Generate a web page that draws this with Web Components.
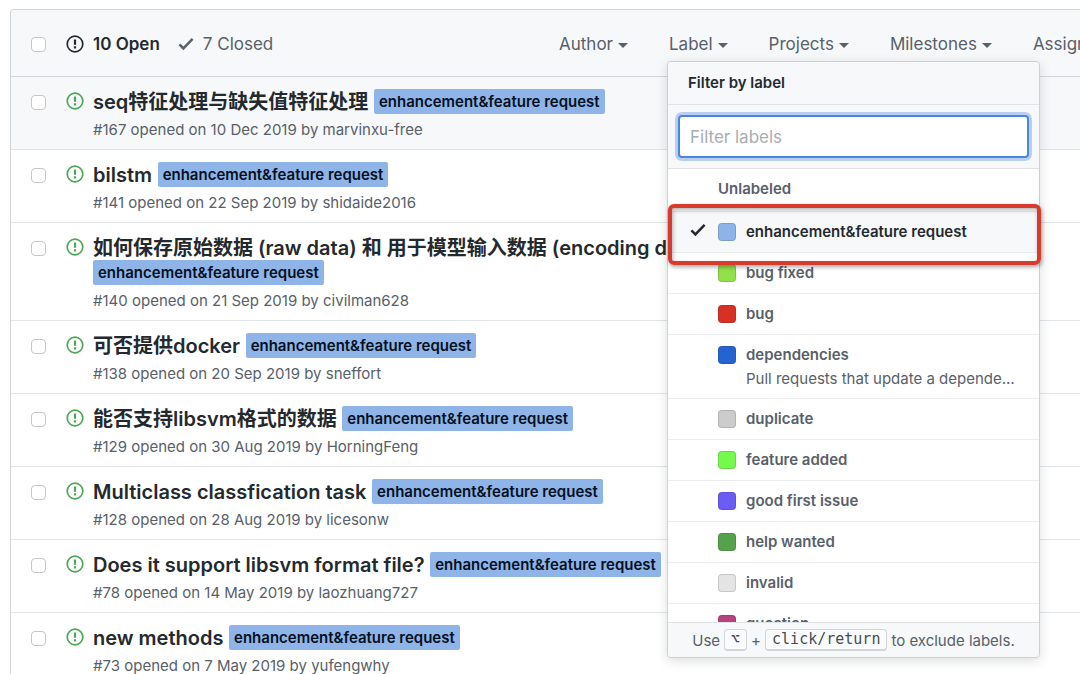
<!DOCTYPE html>
<html lang="en">
<head>
<meta charset="utf-8">
<title>Issues</title>
<style>
  html { overflow: hidden; }
  body {
    margin: 0;
    padding: 9px 0 0 10px;
    background: #fff;
    color: #24292e;
    font-family: Inter, "Noto Sans CJK SC", sans-serif;
    font-size: 15px;
  }
</style>
</head>
<body>
<issue-list>
  <issue-toolbar slot="toolbar" open="10" closed="7">
    <filter-button>Author</filter-button>
    <filter-button>Label
      <label-menu slot="menu">
        <label-option plain>Unlabeled</label-option>
        <label-option selected color="#8db4e8">enhancement&amp;feature request</label-option>
        <label-option color="#92e04a">bug fixed</label-option>
        <label-option color="#d93025">bug</label-option>
        <label-option color="#2563d0" note="Pull requests that update a dependency file">dependencies</label-option>
        <label-option color="#cccccc">duplicate</label-option>
        <label-option color="#75f94d">feature added</label-option>
        <label-option color="#6a5cf5">good first issue</label-option>
        <label-option color="#56a14b">help wanted</label-option>
        <label-option color="#e4e4e4">invalid</label-option>
        <label-option color="#b8417f">question</label-option>
      </label-menu>
    </filter-button>
    <filter-button>Projects</filter-button>
    <filter-button>Milestones</filter-button>
    <filter-button>Assignee</filter-button>
  </issue-toolbar>
  <issue-row active number="167" date="10 Dec 2019" author="marvinxu-free">seq特征处理与缺失值特征处理</issue-row>
  <issue-row number="141" date="22 Sep 2019" author="shidaide2016">bilstm</issue-row>
  <issue-row number="140" date="21 Sep 2019" author="civilman628">如何保存原始数据 (raw data) 和 用于模型输入数据 (encoding data)</issue-row>
  <issue-row number="138" date="20 Sep 2019" author="sneffort">可否提供docker</issue-row>
  <issue-row number="129" date="30 Aug 2019" author="HorningFeng">能否支持libsvm格式的数据</issue-row>
  <issue-row number="128" date="28 Aug 2019" author="licesonw">Multiclass classfication task</issue-row>
  <issue-row number="78" date="14 May 2019" author="laozhuang727">Does it support libsvm format file?</issue-row>
  <issue-row number="73" date="7 May 2019" author="yufengwhy">new methods</issue-row>
</issue-list>

<script>
const ISSUE_ICON = `
  <svg class="issue" viewBox="0 0 18 18" width="18" height="18" aria-hidden="true">
    <circle cx="9" cy="9" r="7.8" fill="none" stroke="currentColor" stroke-width="1.7"/>
    <path d="M7.9 4.4h2.2v5.4H7.9zM7.9 11.2h2.2v2.2H7.9z" fill="currentColor"/>
  </svg>`;

const CHECK_ICON = `
  <svg class="check" viewBox="0 0 16 14" width="16" height="14" aria-hidden="true">
    <path d="M1.4 7.4l4 4L14.6 1.8" fill="none" stroke="currentColor" stroke-width="2.5"/>
  </svg>`;

// shared by the toolbar and the rows
const TICK_CSS = `
  input[type="checkbox"] {
    appearance: none;
    flex: none;
    box-sizing: border-box;
    width: 15px;
    height: 15px;
    margin: 0;
    border: 1px solid #c4c6c8;
    border-radius: 4px;
    background: #fff;
  }
  svg { flex: none; display: block; }
`;

class IssueList extends HTMLElement {
  constructor() {
    super();
    this.attachShadow({ mode: 'open' }).innerHTML = `
      <style>
        :host {
          display: block;
          border: 1px solid #d1d5da;
          border-right: 0;
          border-radius: 4px 0 0 0;
          background: #fff;
        }
      </style>
      <slot name="toolbar"></slot>
      <slot></slot>
    `;
  }
}

class IssueToolbar extends HTMLElement {
  connectedCallback() {
    this.attachShadow({ mode: 'open' }).innerHTML = `
      <style>
        ${TICK_CSS}
        :host {
          display: grid;
          grid-template-columns: minmax(0, 1fr) 521px;
          align-items: center;
          box-sizing: border-box;
          height: 67px;
          padding-top: 2px;
          background: #f6f8fa;
          border-bottom: 1px solid #d1d5da;
          border-radius: 4px 0 0 0;
          font-size: 17px;
          color: #586069;
        }
        .states { display: flex; align-items: center; padding-left: 20px; }
        .issue { margin-left: 20px; }
        a { display: flex; align-items: center; gap: 9px; color: inherit; line-height: 24px; text-decoration: none; }
        a.open { color: #24292e; font-weight: 600; margin-right: 18px; }
        nav { display: flex; gap: 41px; }
      </style>
      <div class="states">
        <input type="checkbox" aria-label="Select all issues">
        <a class="open" href="#open">${ISSUE_ICON}${this.getAttribute('open')} Open</a>
        <a href="#closed">${CHECK_ICON}${this.getAttribute('closed')} Closed</a>
      </div>
      <nav><slot></slot></nav>
    `;
  }
}

class FilterButton extends HTMLElement {
  constructor() {
    super();
    this.attachShadow({ mode: 'open' }).innerHTML = `
      <style>
        :host { display: block; flex: none; position: relative; }
        button {
          display: flex;
          align-items: center;
          gap: 5px;
          padding: 0;
          border: 0;
          background: none;
          color: inherit;
          font: inherit;
          line-height: 24px;
          white-space: nowrap;
        }
        button::after {
          content: "";
          border: 5px solid transparent;
          border-top-color: currentColor;
          border-bottom: 0;
          margin-top: 3px;
        }
        /* the menu hangs under its button */
        ::slotted(label-menu) { position: absolute; top: 29px; left: -2px; z-index: 2; }
      </style>
      <button type="button"><slot></slot></button>
      <slot name="menu"></slot>
    `;
  }
}

class LabelMenu extends HTMLElement {
  constructor() {
    super();
    this.attachShadow({ mode: 'open' }).innerHTML = `
      <style>
        :host {
          display: block;
          box-sizing: border-box;
          width: 373px;
          border: 1px solid #ccd0d5;
          border-radius: 4px;
          background: #fff;
          box-shadow: 0 3px 12px rgba(27,31,35,0.15);
          font-size: 15px;
        }
        header, .search, footer { background: #f6f8fa; }
        header {
          padding: 0 20px;
          border-bottom: 1px solid #e1e4e8;
          border-radius: 4px 4px 0 0;
          line-height: 42px;
          font-weight: 600;
          color: #24292e;
        }
        .search { padding: 10px; border-bottom: 1px solid #dfe2e5; }
        input {
          display: block;
          box-sizing: border-box;
          width: 100%;
          height: 43px;
          padding: 0 10px;
          border: 2px solid #4a86dd;
          border-radius: 4px;
          outline: 0;
          box-shadow: 0 0 0 3px #b9cff1;
          background: #fff;
          color: #24292e;
          font: inherit;
          font-size: 17px;
        }
        input::placeholder { color: #a9adb2; opacity: 1; }
        .options { height: 453px; overflow: hidden; }
        footer {
          display: flex;
          align-items: center;
          justify-content: center;
          gap: 4px;
          height: 34px;
          border-top: 1px solid #dfe2e5;
          border-radius: 0 0 4px 4px;
          white-space: nowrap;
        }
        kbd {
          padding: 0 6px;
          border: 1px solid #d1d5da;
          border-bottom-width: 2px;
          border-radius: 4px;
          background: #fafbfc;
          color: #444d56;
          font: 15px/19px "DejaVu Sans Mono", monospace;
        }
        .mark {
          position: absolute;
          top: 142px;
          left: 0;
          right: -2px;
          box-sizing: border-box;
          height: 61px;
          border: 4px solid #d93a2e;
          border-radius: 6px;
          box-shadow: 1px 2px 4px rgba(0,0,0,0.35), inset 1px 2px 4px rgba(0,0,0,0.3);
          pointer-events: none;
        }
      </style>
      <header>Filter by label</header>
      <div class="search"><input type="text" placeholder="Filter labels" aria-label="Filter labels"></div>
      <div class="options" role="menu"><slot></slot></div>
      <footer><span>Use</span><kbd>⌥</kbd><span>+</span><kbd>click/return</kbd><span>to exclude labels.</span></footer>
      <div class="mark"></div>
    `;
  }
}

class LabelOption extends HTMLElement {
  connectedCallback() {
    const color = this.getAttribute('color');
    const note = this.getAttribute('note');
    this.attachShadow({ mode: 'open' }).innerHTML = `
      <style>
        :host { display: block; border-bottom: 1px solid #eaecef; }
        :host([selected]) { background: #f6f8fa; color: #24292e; }
        button {
          display: grid;
          grid-template-columns: 18px 18px minmax(0, 1fr);
          column-gap: 10px;
          align-items: center;
          width: 100%;
          padding: 8px 20px 8px 22px;
          border: 0;
          background: none;
          color: inherit;
          font: inherit;
          line-height: 24px;
          text-align: left;
        }
        :host([plain]) button { padding-bottom: 10px; }
        :host([plain]) .name { grid-column: 2 / 4; }
        .swatch {
          box-sizing: border-box;
          width: 18px;
          height: 18px;
          border: 1px solid rgba(27,31,35,0.15);
          border-radius: 4px;
        }
        .name { font-weight: 600; grid-column: 3; }
        .note {
          grid-column: 3;
          line-height: 23px;
          overflow: hidden;
          text-overflow: ellipsis;
          white-space: nowrap;
        }
      </style>
      <button type="button" role="menuitem">
        <span>${this.hasAttribute('selected') ? CHECK_ICON : ''}</span>
        ${color ? `<span class="swatch" style="background-color:${color}"></span>` : ''}
        <span class="name"><slot></slot></span>
        ${note ? `<span class="note">${note}</span>` : ''}
      </button>
    `;
  }
}

class IssueRow extends HTMLElement {
  connectedCallback() {
    const number = this.getAttribute('number');
    this.attachShadow({ mode: 'open' }).innerHTML = `
      <style>
        ${TICK_CSS}
        :host {
          display: flex;
          align-items: flex-start;
          padding: 13px 20px 8px;
          border-bottom: 1px solid #e1e4e8;
        }
        :host([active]) { background: #f6f8fa; }
        input[type="checkbox"] { margin-top: 5px; }
        .issue { margin: 2px 9px 0 20px; color: #4ba657; }
        .text { max-width: 800px; }
        .title { line-height: 25px; font-size: 20px; }
        .title a { color: #24292e; font-weight: 600; text-decoration: none; }
        .title .tag {
          padding: 3px 5px;
          border-radius: 2px;
          background: #8fb5e8;
          color: #05101f;
          font-size: 15px;
          line-height: 18px;
          vertical-align: 2px;
          white-space: nowrap;
        }
        .meta { margin-top: 4px; line-height: 22px; font-size: 15px; color: #586069; }
        .meta a { color: inherit; text-decoration: none; }
      </style>
      <input type="checkbox" aria-label="Select issue ${number}">
      ${ISSUE_ICON}
      <div class="text">
        <div class="title"><a href="#${number}"><slot></slot></a> <a class="tag" href="#label">enhancement&amp;feature request</a></div>
        <div class="meta">#${number} opened on ${this.getAttribute('date')} by <a href="#author">${this.getAttribute('author')}</a></div>
      </div>
    `;
  }
}

customElements.define('issue-list', IssueList);
customElements.define('issue-toolbar', IssueToolbar);
customElements.define('filter-button', FilterButton);
customElements.define('label-menu', LabelMenu);
customElements.define('label-option', LabelOption);
customElements.define('issue-row', IssueRow);
</script>
</body>
</html>
